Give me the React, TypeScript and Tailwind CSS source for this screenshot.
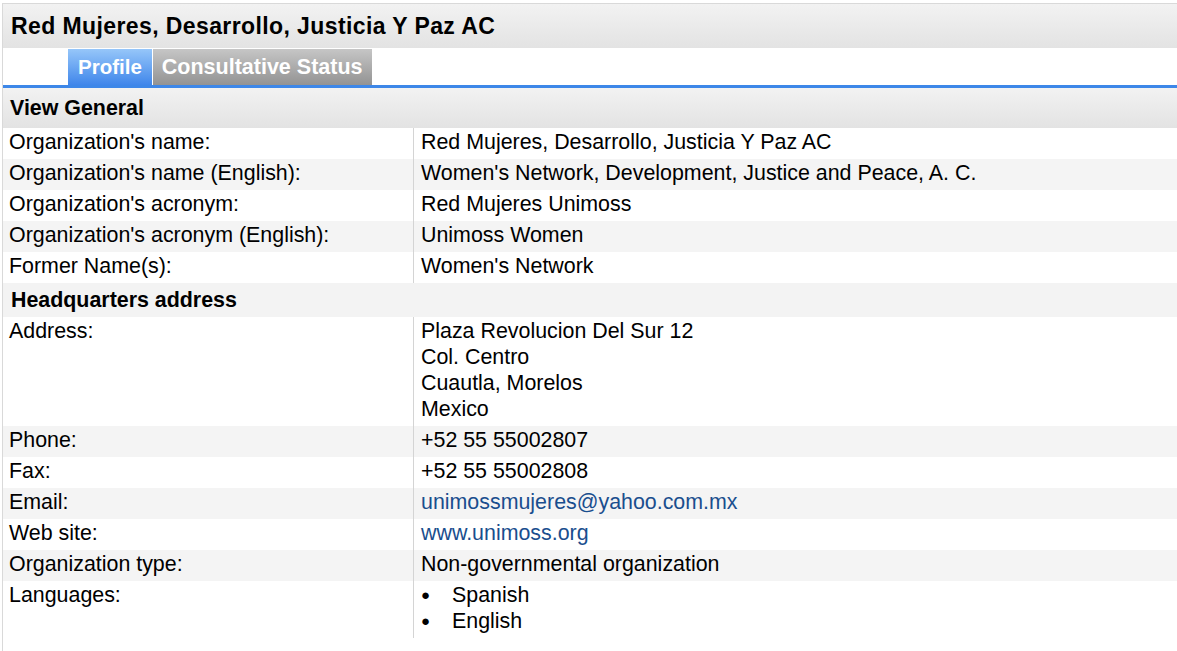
import type { ReactNode } from "react";

type Row = { label: string; value: ReactNode };

const general: Row[] = [
  { label: "Organization's name:", value: "Red Mujeres, Desarrollo, Justicia Y Paz AC" },
  { label: "Organization's name (English):", value: "Women's Network, Development, Justice and Peace, A. C." },
  { label: "Organization's acronym:", value: "Red Mujeres Unimoss" },
  { label: "Organization's acronym (English):", value: "Unimoss Women" },
  { label: "Former Name(s):", value: "Women's Network" },
];

const linkCls = "text-[#1a4e8e] hover:underline";

const headquarters: Row[] = [
  {
    label: "Address:",
    value: (
      <>
        Plaza Revolucion Del Sur 12
        <br />
        Col. Centro
        <br />
        Cuautla, Morelos
        <br />
        Mexico
      </>
    ),
  },
  { label: "Phone:", value: "+52 55 55002807" },
  { label: "Fax:", value: "+52 55 55002808" },
  {
    label: "Email:",
    value: (
      <a href="#" className={linkCls}>
        unimossmujeres@yahoo.com.mx
      </a>
    ),
  },
  {
    label: "Web site:",
    value: (
      <a href="#" className={linkCls}>
        www.unimoss.org
      </a>
    ),
  },
  { label: "Organization type:", value: "Non-governmental organization" },
  {
    label: "Languages:",
    value: (
      <ul>
        {["Spanish", "English"].map((lang) => (
          <li key={lang} className="flex">
            <span className="w-[31px] text-[15px]">●</span>
            {lang}
          </li>
        ))}
      </ul>
    ),
  },
];

function DataRows({ rows }: { rows: Row[] }) {
  return (
    <>
      {rows.map((row, i) => (
        <div
          key={row.label}
          className={`grid grid-cols-[410px_1fr] ${i % 2 === 1 ? "bg-[#f4f4f4]" : "bg-white"}`}
        >
          <div className="pl-[6px] pt-[1px] pb-[4px]">{row.label}</div>
          <div className="border-l border-[#d4d4d4] pl-[7px] pt-[1px] pb-[4px]">{row.value}</div>
        </div>
      ))}
    </>
  );
}

export default function App() {
  return (
    <div className="min-h-screen bg-white pt-[3px] font-['Liberation_Sans',Arial,sans-serif] text-[21.4px] leading-[26px] text-black">
      <div className="ml-[2px] min-h-[648px] border-l border-t border-[#d9d9d9]">
        <div className="flex h-[44px] items-center bg-gradient-to-b from-[#f2f2f2] to-[#e3e3e3] px-[8px] text-[23px] font-bold tracking-[0.4px]">
          Red Mujeres, Desarrollo, Justicia Y Paz AC
        </div>

        <div className="flex h-[37px] items-end pl-[65px]">
          <a
            href="#"
            className="flex h-[36px] items-center bg-gradient-to-b from-[#96c6f9] to-[#3f86ea] px-[10px] text-[20.5px] font-bold text-white"
          >
            Profile
          </a>
          <a
            href="#"
            className="ml-px flex h-[36px] items-center bg-gradient-to-b from-[#c6c6c6] to-[#939393] px-[9px] text-[21.5px] font-bold text-white"
          >
            Consultative Status
          </a>
        </div>
        <div className="h-[3px] bg-[#3d87e8]" />

        <div className="flex h-[40px] items-center bg-gradient-to-b from-[#f2f2f2] to-[#e3e3e3] px-[7px] font-bold">
          View General
        </div>
        <DataRows rows={general} />

        <div className="flex h-[34px] items-center bg-[#f3f3f3] px-[8px] font-bold">
          Headquarters address
        </div>
        <DataRows rows={headquarters} />
      </div>
    </div>
  );
}
